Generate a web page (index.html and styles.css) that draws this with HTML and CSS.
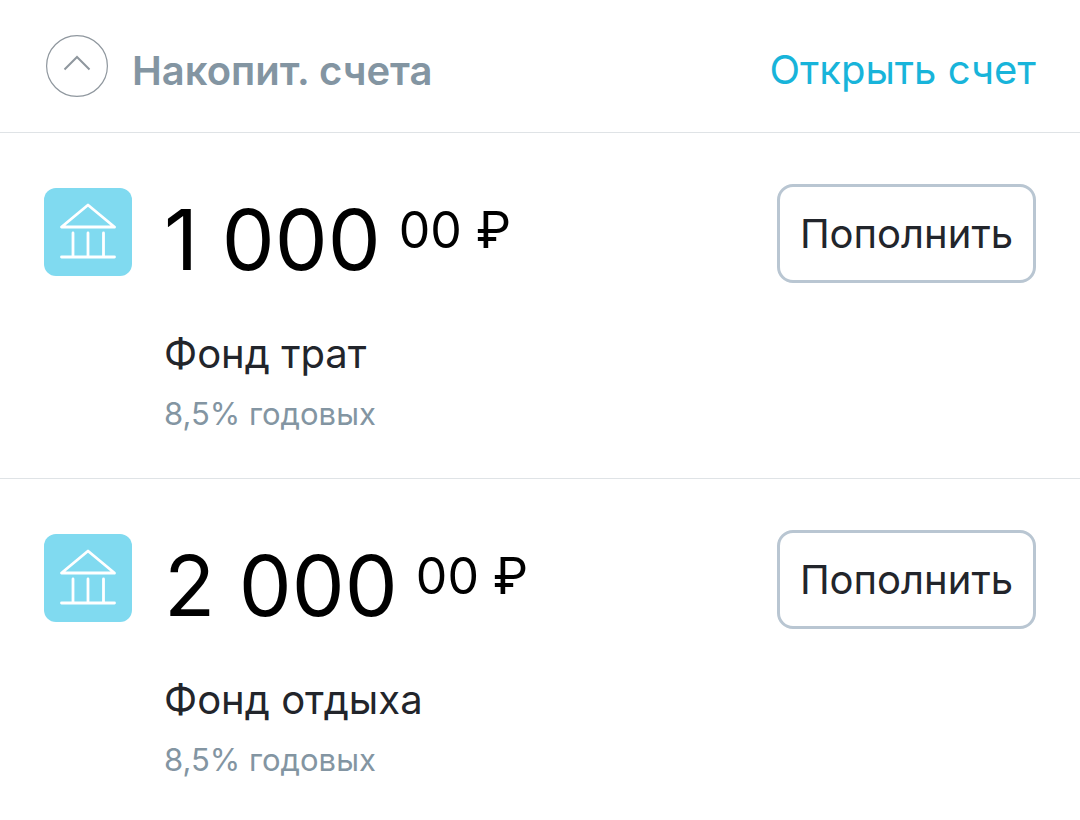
FILE: index.html
```html
<!DOCTYPE html>
<html lang="ru">
<head>
    <meta charset="UTF-8">
    <meta name="viewport" content="width=device-width, initial-scale=1.0">
    <title>Накопит. счета</title>
    <link rel="stylesheet" href="styles.css">
</head>
<body>
    <header class="header">
        <button class="toggle" type="button" aria-label="Свернуть">
            <svg viewBox="0 0 62 62"><circle cx="31" cy="31" r="30.4"/><path d="M18.500 34.500 31 22 43.500 34.500"/></svg>
        </button>
        <h1 class="title">Накопит. счета</h1>
        <a class="open-link" href="#">Открыть счет</a>
    </header>

    <main>
        <section class="account">
            <svg class="account-icon" viewBox="0 0 88 88">
                <path d="M17.500 39 44 17 70.500 39ZM29 45V69M44 45V69M59.500 45V69M17.500 69H70.500"/>
            </svg>
            <div class="account-info">
                <div class="amount">1 000 <span class="cents">00 ₽</span></div>
                <div class="name">Фонд трат</div>
                <div class="rate">8,5% годовых</div>
            </div>
            <button class="refill" type="button">Пополнить</button>
        </section>

        <section class="account">
            <svg class="account-icon" viewBox="0 0 88 88">
                <path d="M17.500 39 44 17 70.500 39ZM29 45V69M44 45V69M59.500 45V69M17.500 69H70.500"/>
            </svg>
            <div class="account-info">
                <div class="amount">2 000 <span class="cents">00 ₽</span></div>
                <div class="name">Фонд отдыха</div>
                <div class="rate">8,5% годовых</div>
            </div>
            <button class="refill" type="button">Пополнить</button>
        </section>
    </main>
</body>
</html>
```

FILE: styles.css
```css
* {
    box-sizing: border-box;
}

body {
    margin: 0;
    background: #fff;
    font-family: Inter, "Noto Sans", sans-serif;
    color: #22252b;
}

.header {
    display: flex;
    align-items: center;
    padding: 35px 44px;
    border-bottom: 1px solid #dfe3e6;
}

.toggle {
    width: 62px;
    height: 62px;
    margin: 0 24px 0 2px;
    padding: 0;
    border: none;
    background: none;
    cursor: pointer;
}

.toggle svg {
    display: block;
    fill: none;
    stroke: #8f979e;
    stroke-width: 1.2;
}

.toggle path {
    stroke-width: 2;
}

.title {
    flex: 1;
    margin: 0;
    padding-top: 10px;
    font-size: 40px;
    line-height: 48px;
    font-weight: 600;
    color: #8395a2;
}

.open-link {
    padding-top: 8px;
    font-size: 40px;
    line-height: 48px;
    color: #18b4da;
    text-decoration: none;
}

.account {
    display: flex;
    align-items: flex-start;
    padding: 51px 44px 46px;
}

.account + .account {
    border-top: 1px solid #dfe3e6;
}

.account-icon {
    width: 88px;
    height: 88px;
    margin: 4px 32px 0 0;
    border-radius: 12px;
    background: #80daf0;
    fill: none;
    stroke: #fff;
    stroke-width: 2.8;
    stroke-linejoin: round;
    stroke-linecap: round;
}

.account-info {
    flex: 1;
}

.amount {
    display: flex;
    gap: 18px;
    font-size: 84px;
    line-height: 112px;
    color: #000;
}

.cents {
    font-size: 50px;
    line-height: 92px;
}

.name {
    margin-top: 30px;
    font-size: 40px;
    line-height: 56px;
}

.rate {
    margin-top: 14px;
    font-size: 31px;
    line-height: 36px;
    color: #8395a2;
}

.refill {
    padding: 0 20px;
    border: 3px solid #b9c6d2;
    border-radius: 16px;
    background: #fff;
    font-family: inherit;
    font-size: 40px;
    line-height: 93px;
    color: #22252b;
    cursor: pointer;
}
```
